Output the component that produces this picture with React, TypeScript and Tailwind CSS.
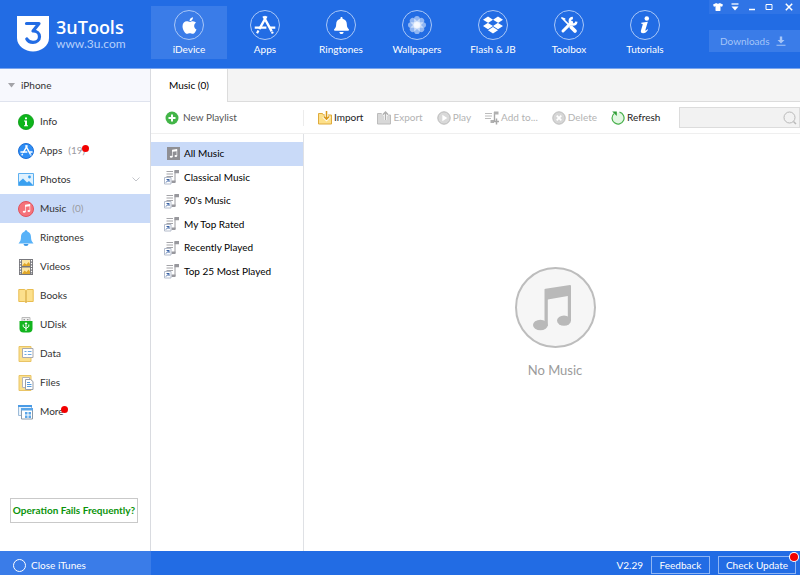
import React from "react";
import { FaApple, FaBell, FaDropbox, FaTshirt } from "react-icons/fa";

function AppStoreGlyph({ className }: { className: string }) {
  return (
    <svg viewBox="0 0 24 24" className={className} fill="none" stroke="currentColor">
      <path d="M13.6 2.500 5.800 16.500M10.300 2.500l9 16.500" strokeWidth="2.600" />
      <path d="M.8 14.800h12.700M17.500 14.800h5.700" strokeWidth="2.600" />
      <path d="m4.900 18-1.600 3M19.600 19.500l.9 1.700" strokeWidth="2.400" />
    </svg>
  );
}

function FlowerGlyph() {
  return (
    <svg viewBox="0 0 24 24" className="size-5" fill="#fff">
      {[0, 45, 90, 135, 180, 225, 270, 315].map((a) => (
        <rect key={a} x="8.600" y="1.200" width="6.800" height="10.800" rx="3.400" opacity="0.5" transform={`rotate(${a} 12 12)`} />
      ))}
      <circle cx="12" cy="12" r="4" opacity="0.6" />
    </svg>
  );
}

function ToolsGlyph() {
  return (
    <svg viewBox="0 0 24 24" className="size-[18px]" fill="none" stroke="#fff" strokeLinecap="round">
      <path d="m4 4 8.500 8.500" strokeWidth="2.200" />
      <path d="m2.600 2.600 3.600 1.400" strokeWidth="2.200" />
      <path d="m15 15 5 5" strokeWidth="5" />
      <path d="M4 20 15.500 8.500" strokeWidth="4" />
      <path d="M17.200 2.600a4.400 4.400 0 1 0 4.600 4.800" strokeWidth="3.200" strokeLinecap="butt" />
    </svg>
  );
}

function InfoGlyph({ className }: { className: string }) {
  return (
    <svg viewBox="0 0 24 24" className={className} fill="currentColor">
      <circle cx="14.400" cy="3.200" r="3" />
      <path d="M7 9 15.800 7.800l-3.300 11c-.3 1.200.8.9 2.600-1.200l1 .8c-2 3.300-4 4.600-6.600 4.600-2.600 0-3.500-1.600-2.900-3.600l2.300-7.600c.3-1-.2-1.300-1.900-1.400z" />
    </svg>
  );
}

function NoteGlyph({ className }: { className: string }) {
  return (
    <svg viewBox="0 0 38 46" className={className} fill="currentColor">
      <path d="M11.500 4.500Q11.500 4 12.500 3.800L37 0q1 0 1 1v35h-3.200V11l-20 3.500V41h-3.300z" />
      <ellipse cx="7.400" cy="40" rx="7.400" ry="5.200" />
      <ellipse cx="31" cy="35.600" rx="7" ry="5.200" />
    </svg>
  );
}

const navItems = [
  { label: "iDevice", icon: <FaApple className="size-[19px]" /> },
  { label: "Apps", icon: <AppStoreGlyph className="size-[22px]" /> },
  { label: "Ringtones", icon: <FaBell className="size-[17px]" /> },
  { label: "Wallpapers", icon: <FlowerGlyph /> },
  {
    label: "Flash & JB",
    icon: <FaDropbox className="size-5" />,
  },
  { label: "Toolbox", icon: <ToolsGlyph /> },
  { label: "Tutorials", icon: <InfoGlyph className="size-[18px]" /> },
];

function Folder({ children }: { children: React.ReactNode }) {
  return (
    <svg viewBox="0 0 16 16" className="size-4">
      <path d="M1 .5h12v15H1z" fill="#fbe08d" stroke="#e9c466" />
      {children}
    </svg>
  );
}

const sideItems = [
  {
    label: "Info",
    icon: (
      <svg viewBox="0 0 16 16" className="size-4">
        <circle cx="8" cy="8" r="7.600" fill="#0db51b" stroke="#0a9a15" strokeWidth=".8" />
        <path d="M7 3.500h2v1.700H7zM6 6.500h3v4.700h1v1H6v-1h1V7.500H6z" fill="#fff" />
      </svg>
    ),
  },
  {
    label: "Apps",
    count: "(19)",
    dot: true,
    icon: (
      <span className="flex size-4 items-center justify-center rounded-full border border-[#1c6fd8] bg-[#2e8df4] text-white">
        <AppStoreGlyph className="size-[13px]" />
      </span>
    ),
  },
  {
    label: "Photos",
    chevron: true,
    icon: (
      <svg viewBox="0 0 16 16" className="size-4">
        <path d="M.5 1.500h15v12H.5z" fill="#dff1fe" stroke="#5eb0f0" />
        <path d="M1 13v-3L5 6.500l4 4 2-1.500 4 4z" fill="#3aa0f0" />
        <circle cx="11.500" cy="5" r="1.400" fill="#3aa0f0" />
      </svg>
    ),
  },
  {
    label: "Music",
    count: "(0)",
    selected: true,
    icon: (
      <span className="flex size-4 items-center justify-center rounded-full border border-[#e2525c] bg-[#f5737b] text-white">
        <NoteGlyph className="size-[9px]" />
      </span>
    ),
  },
  {
    label: "Ringtones",
    icon: (
      <svg viewBox="0 0 16 16" className="size-4">
        <circle cx="8" cy="1.600" r="1.300" fill="#4aa7f2" />
        <path d="M8 1.500c3.500 0 5 2.500 5 5.500 0 3 .8 4.500 2.500 6.500H.5C2.200 11.500 3 10 3 7c0-3 1.500-5.500 5-5.500z" fill="#58b2f8" />
        <path d="M5.500 14h5a2.500 2 0 0 1-5 0z" fill="#3d98e6" />
      </svg>
    ),
  },
  {
    label: "Videos",
    icon: (
      <svg viewBox="0 0 16 16" className="size-4">
        <path d="M1 0h14v16H1z" fill="#77777c" />
        <path d="M4 1h8v6H4zM4 8.500h8v6.500H4z" fill="#fbe6a6" />
        <path d="m4 7 2.500-3 2 1.500L10.500 3 12 5v2zM4 15l2.500-3.500 2 1.500 2-2.500L12 12.500V15z" fill="#e0a72a" />
        <path d="M2.500 1v14M13.500 1v14" stroke="#fff" strokeWidth="1.200" strokeDasharray="1.500 1.200" />
      </svg>
    ),
  },
  {
    label: "Books",
    icon: (
      <svg viewBox="0 0 16 16" className="size-4">
        <path d="M.8 1.500H6c1.200 0 2 .6 2 1.500 0-.9.800-1.500 2-1.500h5.200v12H10c-1.200 0-2 .5-2 1.200 0-.7-.8-1.200-2-1.200H.8z" fill="#fce08c" stroke="#e9bd4f" />
        <path d="M8 3v11.500" stroke="#cf9f35" />
      </svg>
    ),
  },
  {
    label: "UDisk",
    icon: (
      <svg viewBox="0 0 16 16" className="size-4">
        <path d="M4 .5h8v4H4z" fill="#eee" stroke="#bbb" />
        <path d="M5.500 2h1.500v1.200H5.500zM9 2h1.500v1.200H9z" fill="#999" />
        <path d="M1.500 4h13v7.500a4 4 0 0 1-4 4h-5a4 4 0 0 1-4-4z" fill="#12b41e" />
        <path d="M8 6v8M5.200 7.500v2l2.800 2 2.800-2v-2" fill="none" stroke="#fff" />
        <path d="M6.500 7 8 5l1.500 2z" fill="#fff" />
      </svg>
    ),
  },
  {
    label: "Data",
    icon: (
      <Folder>
        <path d="M4.500 2.500h10.500v9H4.500z" fill="#fff" stroke="#a9a9ae" />
        <path d="M6.500 5.500h2M6.500 8.500h2M9.800 5.500h3.700M9.800 8.500h3.700" stroke="#6ba8e0" />
      </Folder>
    ),
  },
  {
    label: "Files",
    icon: (
      <Folder>
        <path d="M4.500 2.500h7v10h-7z" fill="#fff" stroke="#b4b4b8" />
        <path d="M7.500 4.500h5l2.500 2v8H7.500z" fill="#fff" stroke="#9a9ea5" />
        <path d="M9 7.500h3M9 9.500h4.500M9 11.500h4.500" stroke="#549be0" />
      </Folder>
    ),
  },
  {
    label: "More",
    dot: true,
    icon: (
      <svg viewBox="0 0 16 16" className="size-4">
        <path d="M.5 1.500h13v10H.5z" fill="#e8f3fd" stroke="#9dbbd8" />
        <path d="M0 1h14v2H0z" fill="#4a9be6" />
        <path d="M3.500 4.500h11v10.500h-11z" fill="#fff" stroke="#8a9aaa" />
        <path d="M3 4h12v2.500H3z" fill="#5ba6e8" />
        <path d="M7 8h2.500v2.500H7zM10.500 8H13v2.500h-2.500zM7 11.500h2.500V14H7zM10.500 11.500H13V14h-2.500z" fill="#5ba6e8" />
      </svg>
    ),
  },
];

function PlaylistIcon() {
  return (
    <svg viewBox="0 0 16 16" className="size-4">
      <path d="M2.500 2.500H9M2.500 5H9M2.500 7.500H9" stroke="#a4a4a8" />
      <path d="M11 1.500V13" stroke="#9a9a9f" />
      <path d="M10.500 1H15v3.200h-4.500zM7.500 11.500h4V14h-4z" fill="#98989d" />
      <path d="M.5 8.500h6.500V15H.5z" fill="#fff" stroke="#b4bccb" />
      <path d="m2 13.500 3-3M2.500 10.500H5V13" fill="none" stroke="#3a62a4" />
    </svg>
  );
}

const playlists = ["All Music", "Classical Music", "90's Music", "My Top Rated", "Recently Played", "Top 25 Most Played"];

const tools = [
  {
    label: "Import",
    enabled: true,
    icon: (
      <svg viewBox="0 0 14 14" className="size-3.5">
        <path d="M.5 2.500h4l1 1.500h8v9H.5z" fill="#fde08a" stroke="#dfab3c" />
        <path d="M8.500 0v8M5.500 5.500l3 3 3-3" fill="none" stroke="#fff" strokeWidth="3" />
        <path d="M8.500 0v8M5.800 5.500l2.700 2.700 2.700-2.700" fill="none" stroke="#d89818" strokeWidth="1.500" />
      </svg>
    ),
  },
  {
    label: "Export",
    icon: (
      <svg viewBox="0 0 14 14" className="size-3.5">
        <path d="M.5 2.500h4l1 1.500h8v9H.5z" fill="#d8d8d8" stroke="#bcbcbc" />
        <path d="M8.500 9V1.500M5.500 4l3-3 3 3" fill="none" stroke="#fff" strokeWidth="3" />
        <path d="M8.500 9V1M5.800 3.700 8.500 1l2.700 2.700" fill="none" stroke="#b0b0b0" strokeWidth="1.400" />
      </svg>
    ),
  },
  {
    label: "Play",
    icon: (
      <svg viewBox="0 0 14 14" className="size-3.5">
        <circle cx="7" cy="7" r="6.200" fill="#d9d9d9" stroke="#b9b9b9" />
        <path d="m5.300 3.800 5 3.200-5 3.200z" fill="#fff" />
      </svg>
    ),
  },
  {
    label: "Add to...",
    icon: (
      <svg viewBox="0 0 14 14" className="size-3.5">
        <path d="M0 2.500h7M0 5h7M0 7.500h6" stroke="#bcbcbc" />
        <path d="M9.500 1v9M6 10.500h3" stroke="#a8a8a8" strokeWidth="1.400" />
        <path d="M9 .5h4.500v3H9zM5.500 9h3.500v3H5.500z" fill="#b0b0b0" />
        <path d="M11.500 7.500v6M8.500 10.500h5.500" stroke="#a8a8a8" strokeWidth="1.500" />
      </svg>
    ),
  },
  {
    label: "Delete",
    icon: (
      <svg viewBox="0 0 14 14" className="size-3.5">
        <circle cx="7" cy="7" r="6.200" fill="#d6d6d6" stroke="#bdbdbd" />
        <path d="m4.700 4.700 4.600 4.600m0-4.600L4.700 9.300" stroke="#fff" strokeWidth="1.700" />
      </svg>
    ),
  },
  {
    label: "Refresh",
    enabled: true,
    icon: (
      <svg viewBox="0 0 14 14" className="size-3.5">
        <path d="M8.500 1.200A6 6 0 1 1 3 2.600" fill="#e2f7e2" stroke="#48b04c" strokeWidth="1.200" />
        <path d="M1.200.5h4.600v4.600z" fill="#2f9e36" />
      </svg>
    ),
  },
];

function RedDot({ className }: { className: string }) {
  return <span className={`absolute rounded-full bg-[#f20000] ${className}`} />;
}

export default function App() {
  return (
    <div className="flex h-screen flex-col bg-white font-[Lato,'Open_Sans',sans-serif] text-[10px] leading-[15px] text-[#333]">
      <header className="flex h-[69px] shrink-0 border-b border-[#79a4ee] bg-[#226ce4] text-white">
        <div className="flex w-[151px] shrink-0 items-center gap-1.5 pl-4">
          <svg viewBox="0 0 34 38" className="h-[38px] w-[34px]" aria-hidden="true">
            <path d="M1 1h32v22c0 8-8 13.500-16 13.500S1 31 1 23z" fill="#fff" />
            <path d="M10.500 8.500h12.500l-6 7.500c4 0 6.500 2.500 6.500 5.700 0 3.500-3 5.600-6.500 5.600-3 0-5.200-1.300-6.200-3.300" fill="none" stroke="#226ce4" strokeWidth="3.200" strokeLinejoin="round" strokeLinecap="round" />
          </svg>
          <div>
            <div className="font-['Open_Sans',sans-serif] text-lg leading-5 font-semibold">3uTools</div>
            <div className="text-xs leading-[14px] text-[#b5d0fb]">www.3u.com</div>
          </div>
        </div>
        <nav className="flex pt-1.5">
          {navItems.map((item, i) => (
            <button
              key={item.label}
              className={`flex h-[53px] w-[76px] flex-col items-center gap-0.5 pt-1 ${i === 0 ? "bg-[#3a7ce8]" : ""}`}
            >
              <span className="flex size-[30px] items-center justify-center rounded-full border border-[#a9c7f7]">{item.icon}</span>
              <span>{item.label}</span>
            </button>
          ))}
        </nav>
        <div className="ml-auto flex w-[91px] flex-col justify-between pb-4">
          <div className="flex h-3.5 bg-[#2f74e6]">
            <button aria-label="Skin" className="flex w-[17px] items-center justify-center">
              <FaTshirt className="size-2.5" />
            </button>
            <button aria-label="Menu" className="flex w-[17px] items-center justify-center">
              <svg viewBox="0 0 8 8" className="size-2">
                <path d="M.5 1h7" stroke="#fff" strokeWidth="1.300" />
                <path d="M.5 3.500h7L4 7.500z" fill="#fff" />
              </svg>
            </button>
            <button aria-label="Minimize" className="flex w-[17px] items-center justify-center">
              <svg viewBox="0 0 8 8" className="size-2">
                <path d="M1 6.500h6" stroke="#fff" strokeWidth="1.500" />
              </svg>
            </button>
            <button aria-label="Maximize" className="flex w-[17px] items-center justify-center">
              <svg viewBox="0 0 8 8" className="size-2">
                <path d="M1 1.500h6v5H1z" fill="none" stroke="#fff" />
              </svg>
            </button>
            <button aria-label="Close" className="flex flex-1 items-center justify-center">
              <svg viewBox="0 0 8 8" className="size-2">
                <path d="m.8.8 6.400 6.400m0-6.400L.8 7.200" stroke="#fff" strokeWidth="1.500" />
              </svg>
            </button>
          </div>
          <button className="flex h-[22px] items-center gap-1.5 bg-[#3a7ce8] pl-[11px] text-[#a5c5f8]">
            Downloads
            <svg viewBox="0 0 10 10" className="size-2.5" aria-hidden="true">
              <path d="M3.800.5h2.400v3.500h2.300L5 7.500 1.500 4h2.300zM.5 8.800h9v1h-9z" fill="#a5c5f8" />
            </svg>
          </button>
        </div>
      </header>

      <div className="flex min-h-0 flex-1">
        <aside className="flex w-[151px] shrink-0 flex-col border-r border-[#d9dbe0]">
          <button className="flex h-[33px] shrink-0 items-center gap-1.5 border-b border-[#dfe3ee] bg-[#f7f8fd] pl-2">
            <svg viewBox="0 0 7 5" className="h-[5px] w-[7px]" aria-hidden="true">
              <path d="M0 0h7L3.500 4.500z" fill="#a3a3a8" />
            </svg>
            iPhone
          </button>
          <nav className="pt-[5px]">
            {sideItems.map((item) => (
              <button
                key={item.label}
                className={`flex h-[29px] w-full items-center pr-2.5 pl-[18px] ${item.selected ? "bg-[#c9daf8]" : ""}`}
              >
                {item.icon}
                <span className="relative ml-1.5 flex gap-1.5">
                  {item.label}
                  {item.count && <span className="text-[#9a9a9f]">{item.count}</span>}
                  {item.dot && <RedDot className="top-0.5 -right-1 size-[7px]" />}
                </span>
                {item.chevron && (
                  <svg viewBox="0 0 8 5" className="ml-auto h-[5px] w-2">
                    <path d="m.5.500 3.500 3.500L7.500.5" fill="none" stroke="#c3c5ca" />
                  </svg>
                )}
              </button>
            ))}
          </nav>
          <button className="mr-3 ml-2.5 mt-auto mb-7 h-[25px] border border-[#c9c9c9] text-center font-bold whitespace-nowrap text-[#0a930a]">
            Operation Fails Frequently?
          </button>
        </aside>

        <main className="flex min-w-0 flex-1 flex-col">
          <div className="flex h-[33px] shrink-0 bg-[#f4f4f4]">
            <button className="w-[77px] border-r border-[#dcdcdc] bg-white text-black">Music (0)</button>
            <div className="flex-1 border-b border-[#dcdcdc]" />
          </div>
          <div className="flex h-8 shrink-0 items-center border-b border-[#efefef]">
            <div className="flex h-4 w-[153px] shrink-0 items-center border-r border-[#ececec] pl-3.5">
              <button className="flex items-center gap-1 text-[#555]">
                <svg viewBox="0 0 14 14" className="size-3.5" aria-hidden="true">
                  <circle cx="7" cy="7" r="6.500" fill="#43b548" />
                  <path d="M7 3.500v7M3.500 7h7" stroke="#fff" strokeWidth="2" />
                </svg>
                New Playlist
              </button>
            </div>
            <div className="flex gap-3.5 pl-3.5">
              {tools.map((tool) => (
                <button
                  key={tool.label}
                  disabled={!tool.enabled}
                  className={`flex items-center gap-0.5 whitespace-nowrap ${tool.enabled ? "text-[#222]" : "text-[#b3b3b3]"}`}
                >
                  {tool.icon}
                  {tool.label}
                </button>
              ))}
            </div>
            <label className="ml-auto flex h-[21px] w-[121px] shrink-0 items-center border border-[#dcdcdc] bg-[#f2f2f2] pr-0.5">
              <input aria-label="Search music" className="min-w-0 flex-1 bg-transparent px-1 outline-none" />
              <svg viewBox="0 0 14 14" className="size-3.5" fill="none" stroke="#b9b9b9">
                <circle cx="6.500" cy="6.500" r="5.500" />
                <path d="m10.500 10.500 2.500 2.500" strokeWidth="1.500" />
              </svg>
            </label>
          </div>
          <div className="flex min-h-0 flex-1">
            <ul className="grid h-[149px] w-[152px] shrink-0 grid-rows-6 pt-2">
              {playlists.map((name, i) => (
                <li key={name} className="flex">
                  <button
                    className={`flex flex-1 items-center gap-1 pl-[13px] whitespace-nowrap text-black ${i === 0 ? "bg-[#c9daf8]" : ""}`}
                  >
                    {i === 0 ? (
                      <span className="flex size-4 items-center justify-end">
                        <span className="flex size-[13px] items-center justify-center bg-[#8f8f94] text-white">
                          <NoteGlyph className="size-[9px]" />
                        </span>
                      </span>
                    ) : (
                      <PlaylistIcon />
                    )}
                    {name}
                  </button>
                </li>
              ))}
            </ul>
            <section className="flex flex-1 flex-col items-center gap-3 border-l border-[#dfe1e5] pt-[133px] pl-1.5">
              <div className="flex size-[81px] items-center justify-center rounded-full border-2 border-[#bdbdbd] bg-[#f6f6f6] pr-1.5 text-[#b9b9b9]">
                <NoteGlyph className="h-[46px] w-[38px]" />
              </div>
              <p className="text-[13px] leading-5 text-[#9b9b9b]">No Music</p>
            </section>
          </div>
        </main>
      </div>

      <footer className="flex h-6 shrink-0 items-center bg-[#226ce4] text-white">
        <button className="flex h-full w-[151px] items-center gap-[5px] bg-[#3a7ce8] pt-1 pl-[13px]">
          <span className="size-[13px] rounded-full border border-white" />
          Close iTunes
        </button>
        <div className="ml-auto flex items-center gap-2 pt-1 pr-1">
          <span>V2.29</span>
          <button className="h-[18px] w-[59px] border border-[#8fb5f3]">Feedback</button>
          <button className="relative h-[18px] w-[78px] border border-[#8fb5f3]">
            Check Update
            <RedDot className="-top-1 -right-[3px] size-2 ring-1 ring-white" />
          </button>
        </div>
      </footer>
    </div>
  );
}
